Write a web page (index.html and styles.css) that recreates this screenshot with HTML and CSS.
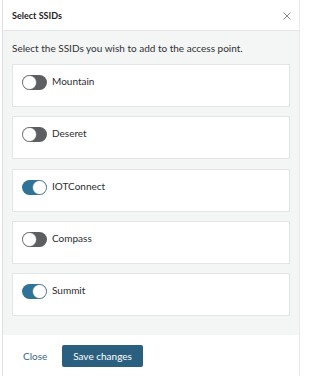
FILE: index.html
```html
<!DOCTYPE html>
<html lang="en">
<head>
<meta charset="utf-8">
<title>Select SSIDs</title>
<link rel="stylesheet" href="styles.css">
</head>
<body>
<div class="modal">
  <div class="modal-header">
    <span class="modal-title">Select SSIDs</span>
    <button class="close-x" aria-label="Close">
      <svg width="8" height="8" viewBox="0 0 8 8"><path d="M0.5 0.5 L7.5 7.5 M7.5 0.5 L0.5 7.5" stroke="#8a8c8e" stroke-width="1" fill="none"/></svg>
    </button>
  </div>
  <div class="modal-body">
    <p class="intro">Select the SSIDs you wish to add to the access point.</p>
    <div class="list">
      <div class="card"><span class="toggle"></span><span class="label">Mountain</span></div>
      <div class="card"><span class="toggle"></span><span class="label">Deseret</span></div>
      <div class="card"><span class="toggle on"></span><span class="label">IOTConnect</span></div>
      <div class="card"><span class="toggle"></span><span class="label">Compass</span></div>
      <div class="card"><span class="toggle on"></span><span class="label">Summit</span></div>
    </div>
  </div>
  <div class="modal-footer">
    <a class="link-close" href="#">Close</a>
    <button class="btn-primary">Save changes</button>
  </div>
</div>
</body>
</html>
```
FILE: styles.css
```css
* { box-sizing: border-box; }
html, body { margin: 0; padding: 0; background: #fff; }
body {
  font-family: Lato, "Open Sans", sans-serif;
  color: #2b2e31;
  width: 300px;
  height: 376px;
  overflow: hidden;
}
.modal {
  margin-left: 2px;
  height: 376px;
  border-left: 1px solid #dddfe0;
  border-right: 1px solid #e8eaea;
  display: flex;
  flex-direction: column;
}
.modal-header {
  height: 31px;
  border-bottom: 1px solid #e6e8e8;
  display: flex;
  align-items: center;
  justify-content: space-between;
  padding: 0 8px 0 9px;
}
.modal-title {
  font-size: 9px;
  font-weight: 700;
  color: #222;
}
.close-x {
  border: 0;
  background: none;
  padding: 0;
  width: 8px;
  height: 8px;
  display: flex;
  margin-top: 1px;
}
.modal-body {
  background: #f4f5f5;
  height: 304px;
  padding: 0 9px;
}
.intro {
  margin: 0;
  padding-top: 10px;
  height: 33px;
  font-size: 10px;
  line-height: 15px;
  color: #2f3235;
}
.list {
  display: flex;
  flex-direction: column;
  gap: 9.25px;
}
.card {
  height: 43px;
  background: #fff;
  border: 1px solid #e4e6e6;
  display: flex;
  align-items: flex-start;
  padding: 10px 9px 0;
}
.toggle {
  position: relative;
  width: 25px;
  height: 15px;
  border-radius: 8px;
  background: #5c5e61;
  flex: none;
}
.toggle::after {
  content: "";
  position: absolute;
  top: 1px;
  left: 1px;
  width: 13px;
  height: 13px;
  border-radius: 50%;
  background: #fff;
  box-shadow: 0 0 0 0.5px #9a9c9e;
}
.toggle.on { background: #2f7398; }
.toggle.on::after { left: 11px; }
.label {
  margin-left: 5px;
  font-size: 10px;
  line-height: 13px;
  color: #2b2e31;
}
.modal-footer {
  flex: 1;
  display: flex;
  align-items: center;
  padding: 0 0 0 20px;
}
.link-close {
  font-size: 10px;
  color: #3b6888;
  text-decoration: none;
  width: 39px;
}
.btn-primary {
  height: 22px;
  width: 81px;
  border: 0;
  border-radius: 2px;
  background: #2b5f80;
  color: #fff;
  font-family: Lato, "Open Sans", sans-serif;
  font-size: 10px;
  padding: 0;
}
```
